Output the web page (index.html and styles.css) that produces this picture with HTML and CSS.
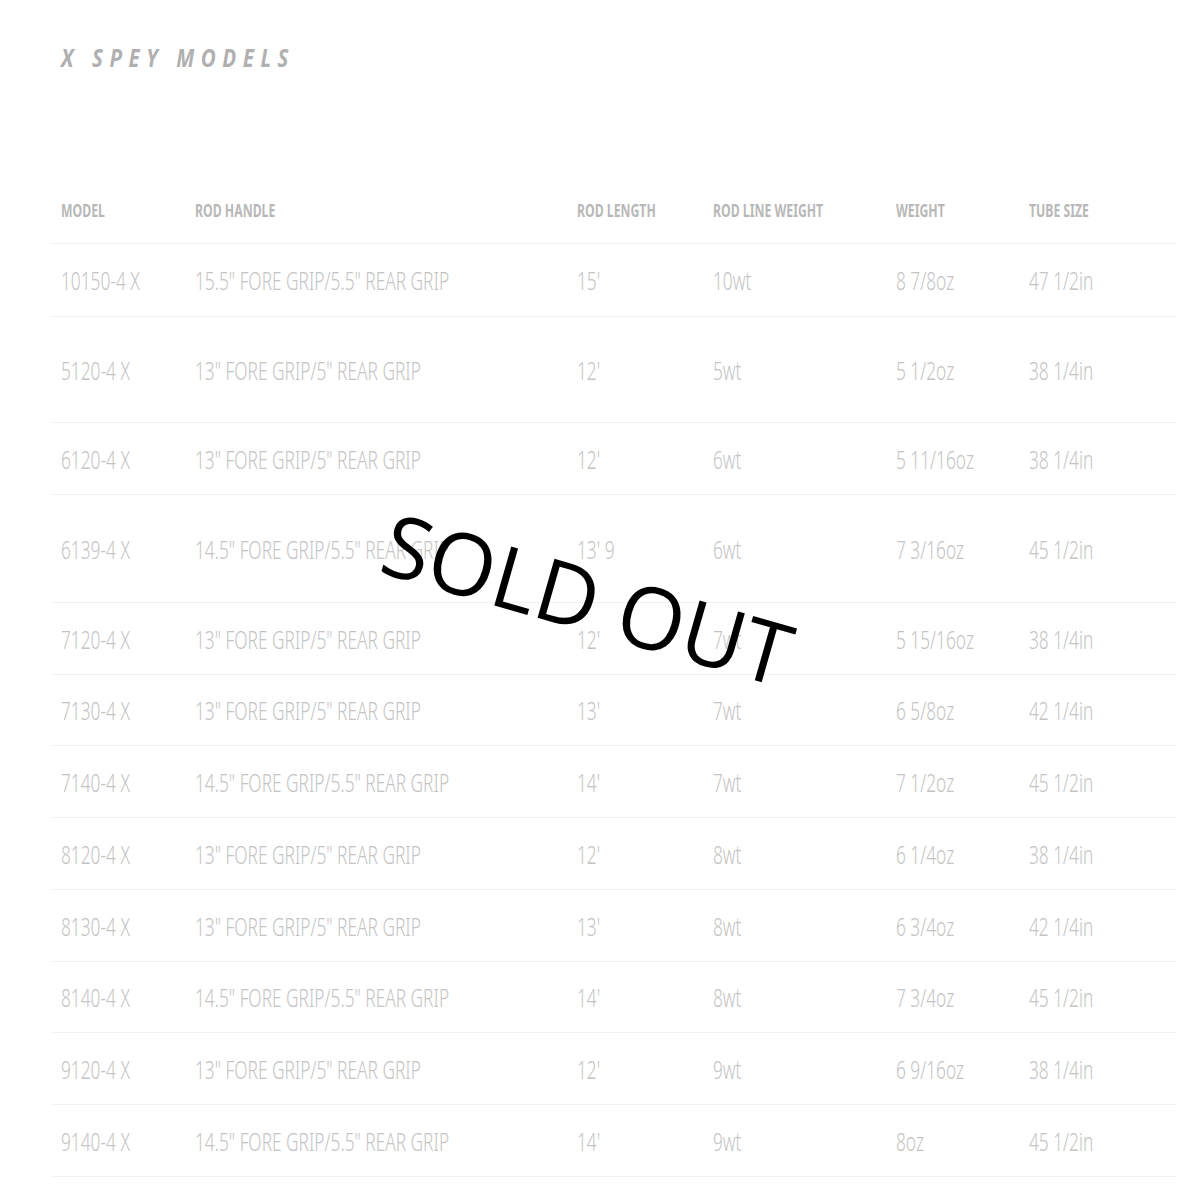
FILE: index.html
```html
<!DOCTYPE html>
<html>
<head>
<meta charset="utf-8">
<link rel="stylesheet" href="styles.css">
</head>
<body>
<div class="page">
  <h1 class="title"><span class="squeeze">X SPEY MODELS</span></h1>
  <div class="table">
    <div class="row head">
      <div>MODEL</div><div>ROD HANDLE</div><div>ROD LENGTH</div><div>ROD LINE WEIGHT</div><div>WEIGHT</div><div>TUBE SIZE</div>
    </div>
    <div class="row r73"><div>10150-4 X</div><div>15.5" FORE GRIP/5.5" REAR GRIP</div><div>15'</div><div>10wt</div><div>8 7/8oz</div><div>47 1/2in</div></div>
    <div class="row r106"><div>5120-4 X</div><div>13" FORE GRIP/5" REAR GRIP</div><div>12'</div><div>5wt</div><div>5 1/2oz</div><div>38 1/4in</div></div>
    <div class="row r72"><div>6120-4 X</div><div>13" FORE GRIP/5" REAR GRIP</div><div>12'</div><div>6wt</div><div>5 11/16oz</div><div>38 1/4in</div></div>
    <div class="row r108"><div>6139-4 X</div><div>14.5" FORE GRIP/5.5" REAR GRIP</div><div>13' 9</div><div>6wt</div><div>7 3/16oz</div><div>45 1/2in</div></div>
    <div class="row r72"><div>7120-4 X</div><div>13" FORE GRIP/5" REAR GRIP</div><div>12'</div><div>7wt</div><div>5 15/16oz</div><div>38 1/4in</div></div>
    <div class="row r71"><div>7130-4 X</div><div>13" FORE GRIP/5" REAR GRIP</div><div>13'</div><div>7wt</div><div>6 5/8oz</div><div>42 1/4in</div></div>
    <div class="row r72"><div>7140-4 X</div><div>14.5" FORE GRIP/5.5" REAR GRIP</div><div>14'</div><div>7wt</div><div>7 1/2oz</div><div>45 1/2in</div></div>
    <div class="row r72"><div>8120-4 X</div><div>13" FORE GRIP/5" REAR GRIP</div><div>12'</div><div>8wt</div><div>6 1/4oz</div><div>38 1/4in</div></div>
    <div class="row r72"><div>8130-4 X</div><div>13" FORE GRIP/5" REAR GRIP</div><div>13'</div><div>8wt</div><div>6 3/4oz</div><div>42 1/4in</div></div>
    <div class="row r71"><div>8140-4 X</div><div>14.5" FORE GRIP/5.5" REAR GRIP</div><div>14'</div><div>8wt</div><div>7 3/4oz</div><div>45 1/2in</div></div>
    <div class="row r72"><div>9120-4 X</div><div>13" FORE GRIP/5" REAR GRIP</div><div>12'</div><div>9wt</div><div>6 9/16oz</div><div>38 1/4in</div></div>
    <div class="row r72"><div>9140-4 X</div><div>14.5" FORE GRIP/5.5" REAR GRIP</div><div>14'</div><div>9wt</div><div>8oz</div><div>45 1/2in</div></div>
  </div>
  <div class="soldout">SOLD OUT</div>
</div>
</body>
</html>
```
FILE: styles.css
```css
html, body {
  margin: 0;
  padding: 0;
  background: #ffffff;
}
.page {
  position: relative;
  width: 1178px;
  height: 1200px;
  overflow: hidden;
  padding-left: 52px;
  box-sizing: border-box;
  font-family: "Noto Sans", "Liberation Sans", sans-serif;
}
.title {
  margin: 0;
  padding: 42px 0 0 9px;
  height: 134px;
  box-sizing: border-box;
  font-size: 25px;
  line-height: 30px;
  font-weight: 700;
  font-style: italic;
  letter-spacing: 8px;
  color: #b0b0b0;
}
.squeeze {
  display: inline-block;
  transform: scaleX(0.82);
  transform-origin: 0 50%;
}
.table {
  width: 1124px;
}
.row {
  display: grid;
  grid-template-columns: 134px 382px 136px 183px 133px 1fr;
  align-items: center;
  border-bottom: 1px solid #f1f1f1;
  box-sizing: border-box;
}
.row > div {
  padding-left: 9px;
  white-space: nowrap;
  transform-origin: 9px 50%;
}
.head {
  height: 110px;
  align-items: end;
  padding-bottom: 22px;
  font-size: 17px;
  line-height: 20px;
  font-weight: 700;
  color: #b8b8b8;
}
.head > div {
  transform: scaleX(0.72);
}
.row:not(.head) {
  font-size: 26px;
  line-height: 30px;
  font-weight: 300;
  color: #c4c4c4;
}
.row:not(.head) > div {
  transform: scaleX(0.665);
}
.r73 { height: 73px; }
.r72 { height: 72px; }
.r71 { height: 71px; }
.r106 { height: 106px; }
.r108 { height: 108px; }
.soldout {
  position: absolute;
  left: 588px;
  top: 598px;
  transform: translate(-50%, -50%) rotate(16deg);
  font-family: "Open Sans", "Noto Sans", sans-serif;
  font-size: 86px;
  line-height: 1;
  font-weight: 400;
  color: #000;
  white-space: nowrap;
}
```
